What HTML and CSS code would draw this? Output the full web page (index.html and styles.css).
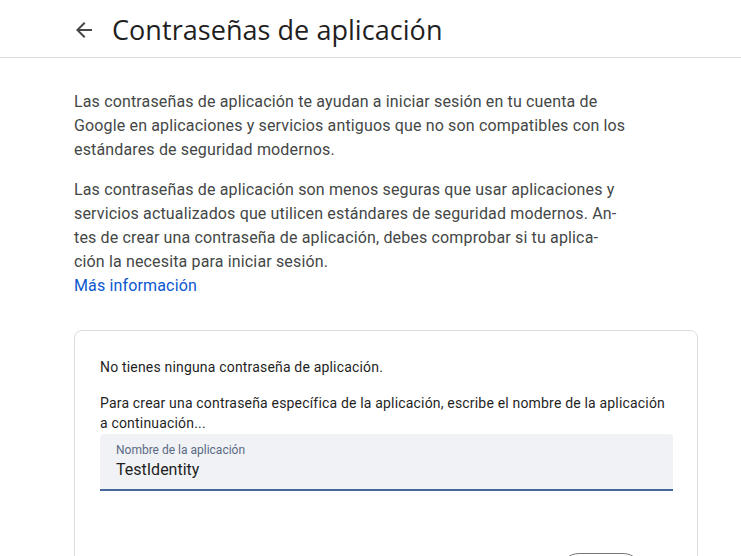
FILE: index.html
```html
<!DOCTYPE html>
<html lang="es">
<head>
<meta charset="utf-8">
<title>Contraseñas de aplicación</title>
<link rel="stylesheet" href="styles.css">
</head>
<body>
<header class="topbar">
  <div class="topbar-inner">
    <span class="back" aria-label="Atrás">
      <svg width="24" height="24" viewBox="0 0 24 24"><path d="M20 11H7.83l5.59-5.59L12 4l-8 8 8 8 1.41-1.41L7.83 13H20v-2z" fill="#444746"/></svg>
    </span>
    <h1 class="title">Contraseñas de aplicación</h1>
  </div>
</header>
<main class="content">
  <p class="intro">Las contraseñas de aplicación te ayudan a iniciar sesión en tu cuenta de Google en aplicaciones y servicios antiguos que no son compatibles con los estándares de seguridad modernos.</p>
  <p class="intro second">Las contraseñas de aplicación son menos seguras que usar aplicaciones y servicios actualizados que utilicen estándares de seguridad modernos. An&shy;tes de crear una contraseña de aplicación, debes comprobar si tu aplica&shy;ción la necesita para iniciar sesión.<br><a class="link" href="#">Más información</a></p>

  <section class="card">
    <p class="card-text">No tienes ninguna contraseña de aplicación.</p>
    <p class="card-text prompt">Para crear una contraseña específica de la aplicación, escribe el nombre de la aplicación a continuación...</p>
    <div class="field">
      <span class="field-label">Nombre de la aplicación</span>
      <span class="field-value">TestIdentity</span>
    </div>
    <div class="actions">
      <button class="btn">Crear</button>
    </div>
  </section>
</main>
</body>
</html>
```

FILE: styles.css
```css
* { box-sizing: border-box; }
html, body { margin: 0; padding: 0; background: #fff; }
body { font-family: Roboto, "Noto Sans", Arial, sans-serif; color: #1f1f1f; overflow: hidden; }

.topbar { height: 58px; border-bottom: 1px solid #dadce0; }
.topbar-inner { display: flex; align-items: center; height: 57px; padding-left: 72px; padding-top: 2px; }
.back { width: 24px; height: 24px; display: flex; margin-right: 16px; }
.title { margin: 0; font-family: "Open Sans", Roboto, sans-serif; font-weight: 400; font-size: 27px; color: #1f1f1f; letter-spacing: 0.05px; }

.content { padding: 32px 0 0 74px; width: 700px; }
.intro { margin: 0; width: 560px; font-size: 16px; line-height: 24px; color: #444746; letter-spacing: 0.15px; }
.intro.second { margin-top: 16px; width: 548px; }
.link { color: #0b57d0; text-decoration: none; }

.card { margin-top: 32px; width: 624px; border: 1px solid #dadce0; border-radius: 8px; padding: 26px 24px 40px 25px; }
.card-text { margin: 0; font-size: 14px; line-height: 20px; color: #1f1f1f; letter-spacing: 0.18px; }
.card-text.prompt { margin-top: 16px; }

.field { display: flex; flex-direction: column; height: 57px; margin-top: 1px; background: #f0f2f5; border-radius: 4px 4px 0 0; border-bottom: 2px solid #44689c; padding: 8px 16px 0; }
.field-label { font-size: 12px; line-height: 16px; color: #5b6a84; }
.field-value { font-size: 16px; line-height: 24px; color: #1f1f1f; }

.actions { display: flex; justify-content: flex-end; padding-right: 30px; margin-top: 62px; }
.btn { height: 40px; padding: 0 24px; border: 1px solid #747775; border-radius: 20px; background: #fff; color: #0b57d0; font-family: Roboto, sans-serif; font-size: 14px; }
```
